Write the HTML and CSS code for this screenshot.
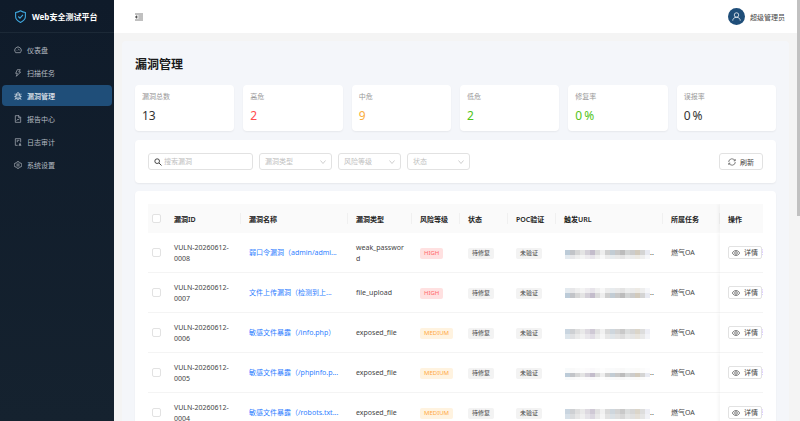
FILE: index.html
```html
<!DOCTYPE html>
<html lang="zh-CN">

<head>
    <meta charset="UTF-8">
    <meta name="viewport" content="width=device-width, initial-scale=1.0">
    <title>Web安全测试平台</title>
    <link rel="stylesheet" href="styles.css">
</head>

<body>
    <aside class="sidebar">
        <div class="logo">
            <svg class="logo-icon" viewBox="0 0 24 24"><path d="M12 1.500c3 2 6 2.800 9 3v8c0 5-4 8-9 10.500C7 20.500 3 17.500 3 12.500v-8c3-.2 6-1 9-3z"/><path d="M8 12l3 3 5.500-6"/></svg>
            <span>Web安全测试平台</span>
        </div>
        <nav class="menu">
            <a class="menu-item" href="#">
                <svg class="icon" viewBox="0 0 24 24"><path d="M5 20a10 10 0 1 1 14 0zM12 13l4-4M12 5v2M5 13h2M17 13h2"/></svg>仪表盘
            </a>
            <a class="menu-item" href="#">
                <svg class="icon" viewBox="0 0 24 24"><path d="M10 2h9l-5 7h6L7 22l3-9H5z"/></svg>扫描任务
            </a>
            <a class="menu-item active" href="#">
                <svg class="icon" viewBox="0 0 24 24"><path d="M6 9h12v7a6 6 0 0 1-12 0zM8 9V6a4 4 0 0 1 8 0v3M12 14v8M1 14h5M18 14h5M3 5v2l3 3M21 5v2l-3 3M3 23v-2l4-3M21 23v-2l-4-3"/></svg>漏洞管理
            </a>
            <a class="menu-item" href="#">
                <svg class="icon" viewBox="0 0 24 24"><path d="M4 2h11l5 5v15H4zM14 2v6h6M8 17l3-4 2 2 3-4"/></svg>报告中心
            </a>
            <a class="menu-item" href="#">
                <svg class="icon" viewBox="0 0 24 24"><path d="M11 22H4V2h16v11M8 7h8M8 11h4M14 22h8M18 22v-3M15 19h6M18 15v4"/></svg>日志审计
            </a>
            <a class="menu-item" href="#">
                <svg class="icon" viewBox="0 0 24 24"><path d="M9.500 2h5l1 3 2.500 1.500 3-.7 2.300 4.200-2.200 2 2.200 2-2.300 4.200-3-.7-2.500 1.500-1 3h-5l-1-3L6 17.500l-3 .7L.7 14l2.200-2-2.200-2L3 5.800l3 .7L8.500 5z"/><circle cx="12" cy="12" r="3.500"/></svg>系统设置
            </a>
        </nav>
    </aside>

    <div class="main">
        <header class="header">
            <button class="fold-btn" aria-label="收起菜单">
                <svg class="icon" viewBox="0 0 24 24"><path d="M0 3h24M10 9h14M10 15h14M0 21h24"/><path class="solid" d="M6 8v8l-5-4z"/></svg>
            </button>
            <div class="user">
                <span class="avatar"><svg viewBox="0 0 24 24"><circle cx="12" cy="8" r="6"/><path d="M2 23c0-5 4-9 10-9s10 4 10 9"/></svg></span>
                <span>超级管理员</span>
            </div>
        </header>

        <main class="content">
            <h1 class="page-title">漏洞管理</h1>

            <section class="stats">
                <div class="card stat"><div class="stat-label">漏洞总数</div><div class="stat-value">13</div></div>
                <div class="card stat"><div class="stat-label">高危</div><div class="stat-value red">2</div></div>
                <div class="card stat"><div class="stat-label">中危</div><div class="stat-value orange">9</div></div>
                <div class="card stat"><div class="stat-label">低危</div><div class="stat-value green">2</div></div>
                <div class="card stat"><div class="stat-label">修复率</div><div class="stat-value green">0<span>%</span></div></div>
                <div class="card stat"><div class="stat-label">误报率</div><div class="stat-value">0<span>%</span></div></div>
            </section>

            <section class="card toolbar">
                <label class="search">
                    <svg class="icon" viewBox="0 0 24 24"><circle cx="9.500" cy="9.500" r="7"/><path d="M15 15l7.500 7.500"/></svg>
                    <input type="text" placeholder="搜索漏洞" aria-label="搜索漏洞">
                </label>
                <div class="select wide">
                    <select aria-label="漏洞类型"><option>漏洞类型</option></select>
                    <svg class="arrow" viewBox="0 0 24 24"><path d="M2 6l10 12L22 6"/></svg>
                </div>
                <div class="select">
                    <select aria-label="风险等级"><option>风险等级</option></select>
                    <svg class="arrow" viewBox="0 0 24 24"><path d="M2 6l10 12L22 6"/></svg>
                </div>
                <div class="select">
                    <select aria-label="状态"><option>状态</option></select>
                    <svg class="arrow" viewBox="0 0 24 24"><path d="M2 6l10 12L22 6"/></svg>
                </div>
                <button class="refresh">
                    <svg class="icon" viewBox="0 0 24 24"><path d="M21 8A10 10 0 0 0 2 12M3 16a10 10 0 0 0 19-4M21.500 3v5.500H17M2.500 21v-5.500H7"/></svg>刷新
                </button>
            </section>

            <section class="card table-card">
                <table class="table">
                    <colgroup>
                        <col class="c-check"><col class="c-id"><col class="c-name"><col class="c-type"><col class="c-tag"><col class="c-tag"><col class="c-tag"><col class="c-url"><col class="c-task"><col class="c-action">
                    </colgroup>
                    <thead>
                        <tr>
                            <th class="check"><input type="checkbox" aria-label="全选"></th>
                            <th>漏洞ID</th>
                            <th>漏洞名称</th>
                            <th>漏洞类型</th>
                            <th>风险等级</th>
                            <th>状态</th>
                            <th>POC验证</th>
                            <th>触发URL</th>
                            <th>所属任务</th>
                            <th class="action">操作</th>
                        </tr>
                    </thead>
                    <tbody id="rows"></tbody>
                </table>
            </section>
        </main>
    </div>
    <div class="scrollbar"></div>

    <script src="script.js"></script>
</body>

</html>
```
FILE: styles.css
```css
* {
    box-sizing: border-box;
}

body {
    margin: 0;
    height: 100vh;
    overflow: hidden;
    display: flex;
    background: #f4f4f4;
    color: #444;
    font-family: "Noto Sans", "Noto Sans CJK SC", sans-serif;
    font-size: 7px;
}

button,
input,
select {
    font: inherit;
    color: inherit;
    margin: 0;
}

svg {
    fill: none;
    stroke: currentColor;
    stroke-width: 2;
    flex: none;
}

.icon {
    width: 8px;
    height: 8px;
}

/* sidebar */
.sidebar {
    width: 114px;
    flex: none;
    background: linear-gradient(#0f1b2a, #15222f);
    color: #b4bac1;
}

.logo {
    height: 33px;
    padding-left: 14px;
    display: flex;
    align-items: center;
    gap: 5px;
    border-bottom: 1px solid #1c2937;
    color: #fff;
    font-size: 8px;
    font-weight: 700;
    white-space: nowrap;
}

.logo-icon {
    width: 13px;
    height: 13px;
    color: #3fa9e0;
}

.menu {
    padding: 6px 2px 0;
    display: flex;
    flex-direction: column;
    gap: 2px;
}

.menu-item {
    height: 21px;
    padding-left: 12px;
    display: flex;
    align-items: center;
    gap: 5px;
    border-radius: 4px;
    color: inherit;
    text-decoration: none;
}

.menu-item.active {
    background: #1f4e79;
    color: #fff;
}

/* header */
.main {
    flex: 1;
    min-width: 0;
    overflow: hidden;
}

.header {
    height: 33px;
    padding: 0 12px 0 21px;
    display: flex;
    align-items: center;
    justify-content: space-between;
    background: #fff;
}

.fold-btn {
    display: flex;
    padding: 0;
    border: 0;
    background: none;
}

.solid {
    fill: currentColor;
}

.user {
    display: flex;
    align-items: center;
    gap: 5px;
}

.avatar {
    width: 17px;
    height: 17px;
    display: grid;
    place-items: center;
    border-radius: 50%;
    background: #1f4e79;
    color: #fff;
}

.avatar svg {
    width: 9px;
    height: 9px;
}

/* content */
.content {
    margin: 8px 8px 0;
    padding: 13px;
    border-radius: 4px;
    background: #f4f6fa;
}

.page-title {
    margin: 0;
    padding: 1px 0 10px;
    line-height: 20px;
    font-size: 12px;
    color: #1a1a1a;
}

.card {
    background: #fff;
    border-radius: 4px;
    box-shadow: 0 1px 2px rgba(0, 0, 0, 0.06);
}

.stats {
    display: grid;
    grid-template-columns: repeat(6, 1fr);
    gap: 9px;
}

.stat {
    height: 46px;
    padding: 6px 7px;
}

.stat-label {
    line-height: 12px;
    color: #999;
}

.stat-value {
    margin-top: 4px;
    line-height: 17px;
    font-size: 12px;
    color: #333;
}

.stat-value span {
    margin-left: 2px;
}

.stat-value.red {
    color: #ff4d4f;
}

.stat-value.orange {
    color: #faad3c;
}

.stat-value.green {
    color: #52c41a;
}

/* toolbar */
.toolbar {
    margin-top: 9px;
    padding: 13px;
    display: flex;
    gap: 6px;
}

.search,
.select,
.refresh {
    height: 17px;
    display: flex;
    align-items: center;
    border: 1px solid #e2e2e2;
    border-radius: 3px;
    background: #fff;
}

.search {
    width: 105px;
    padding: 0 5px;
    gap: 2px;
}

.search .icon {
    stroke-width: 3;
}

.search input {
    width: 100%;
    min-width: 0;
    padding: 0;
    border: 0;
    outline: 0;
}

.search input::placeholder {
    color: #bfbfbf;
}

.select {
    width: 63px;
    padding: 0 5px;
}

.select.wide {
    width: 73px;
}

.select select {
    flex: 1;
    min-width: 0;
    padding: 0;
    border: 0;
    background: none;
    appearance: none;
    color: #bfbfbf;
}

.arrow {
    width: 6px;
    height: 6px;
    color: #bfbfbf;
    stroke-width: 3;
}

.refresh {
    margin-left: auto;
    padding: 0 8px;
    gap: 4px;
}

/* table */
.table-card {
    margin-top: 8px;
    padding: 13px;
}

.table {
    width: 100%;
    table-layout: fixed;
    border-collapse: separate;
    border-spacing: 0;
}

.c-check {
    width: 18px;
}

.c-id {
    width: 75px;
}

.c-name {
    width: 107px;
}

.c-type {
    width: 64px;
}

.c-tag {
    width: 48px;
}

.c-url {
    width: 107px;
}

.c-task {
    width: 57px;
}

.c-action {
    width: 43px;
}

.table th {
    position: relative;
    height: 29px;
    padding: 0 0 0 8px;
    background: #fafafa;
    color: #222;
    font-weight: 600;
    text-align: left;
    white-space: nowrap;
}

.table th + th:not(.action)::after {
    content: "";
    position: absolute;
    right: 0;
    top: 9px;
    height: 11px;
    border-right: 1px solid #f0f0f0;
}

.table td {
    height: 40px;
    padding: 0 8px;
    border-bottom: 1px solid #f4f4f4;
    line-height: 11px;
    word-break: break-all;
}

.table .check {
    padding: 0 0 0 4px;
}

.check input {
    display: block;
    width: 9px;
    height: 9px;
    appearance: none;
    border: 1px solid #e2e2e2;
    border-radius: 2px;
    background: #fff;
}

.table .id {
    padding-right: 4px;
    word-break: normal;
}

.table .name {
    white-space: nowrap;
}

.name a {
    color: #2f80ff;
    text-decoration: none;
}

.tag {
    display: inline-block;
    padding: 0 4px;
    border-radius: 2px;
    background: #f3f3f3;
    font-size: 6px;
    white-space: nowrap;
}

.tag.high {
    background: #ffe1e1;
    color: #ff6b6b;
}

.tag.medium {
    background: #fff3e0;
    color: #ffa940;
}

.mosaic {
    display: flex;
    align-items: center;
}

.mosaic svg {
    width: 86px;
    height: 20px;
    stroke: none;
}

.table .action {
    padding-right: 0;
    box-shadow: -2px 0 3px rgba(0, 0, 0, 0.04);
    clip-path: inset(0 0 0 -5px);
}

.actions {
    display: flex;
    overflow: hidden;
}

.detail,
.verify {
    flex: none;
    height: 13px;
    display: flex;
    align-items: center;
    border: 1px solid #e2e2e2;
    border-radius: 2px;
    background: #fff;
}

.detail {
    padding: 0 3px;
    gap: 4px;
}

.verify {
    padding: 0;
    border: 0;
    color: #2f80ff;
}

/* scrollbar */
.scrollbar {
    flex: none;
    width: 3px;
    height: 216px;
    background: #c1c1c1;
}
```
FILE: script.js
```js
const rows = [
    ['0008', '弱口令漏洞（admin/admi...', 'weak_password', 'high'],
    ['0007', '文件上传漏洞（检测到上...', 'file_upload', 'high'],
    ['0006', '敏感文件暴露（/info.php）', 'exposed_file', 'medium'],
    ['0005', '敏感文件暴露（/phpinfo.p...', 'exposed_file', 'medium'],
    ['0004', '敏感文件暴露（/robots.txt...', 'exposed_file', 'medium']
];

// masked url: one shade per block, bands are [y, height, opacity]
const shades = ['#bccbd8', '#c2c4c8', '#d6d6d6', '#e4e4e4', '#d4d0d8', '#c3bccb', '#dadada', '#eeeeee', '#cfcfcf', '#c2ccd4', '#c8c8c8', '#bcbcbc', '#d2d4d4', '#cccccc', '#d2cabc', '#d4d4d4', '#e8eaf2'];
const bands = [
    [[7, 5, 1], [12, 4, 0.4]],
    [[5, 5, 0.4], [10, 5, 1]],
    [[6, 5, 0.8], [11, 5, 0.5]],
    [[5, 5, 0.1], [10, 4, 1.0], [14, 3, 0.1]],
    [[6, 5, 0.8], [11, 5, 0.6]]
];

function mosaic(row) {
    let blocks = '';
    for (const [y, height, opacity] of bands[row]) {
        shades.forEach((color, i) => {
            blocks += `<rect x="${1 + i * 5}" y="${y}" width="5" height="${height}" fill="${color}" opacity="${opacity}"/>`;
        });
    }
    return `<svg viewBox="0 0 86 20">${blocks}</svg>`;
}

document.getElementById('rows').innerHTML = rows.map(([id, name, type, level], i) => `
    <tr>
        <td class="check"><input type="checkbox" aria-label="选择 ${id}"></td>
        <td class="id">VULN-20260612-${id}</td>
        <td class="name"><a href="#">${name}</a></td>
        <td>${type}</td>
        <td><span class="tag ${level}">${level.toUpperCase()}</span></td>
        <td><span class="tag">待修复</span></td>
        <td><span class="tag">未验证</span></td>
        <td><div class="mosaic">${mosaic(i)}${i === 2 ? '' : '..'}</div></td>
        <td>燃气OA</td>
        <td class="action">
            <div class="actions">
                <button class="detail"><svg class="icon" viewBox="0 0 24 24"><path d="M1 12c5-10 17-10 22 0-5 10-17 10-22 0z"/><circle cx="12" cy="12" r="4"/></svg>详情</button>
                <button class="verify">验证</button>
            </div>
        </td>
    </tr>`).join('');
```
